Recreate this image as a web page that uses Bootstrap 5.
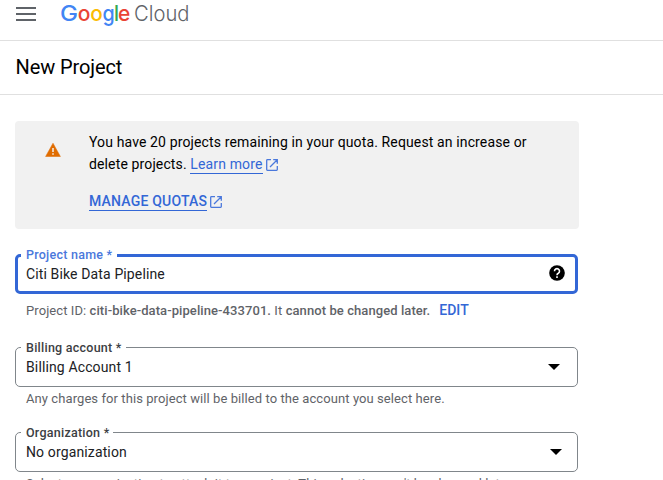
<!DOCTYPE html>
<html lang="en">
<head>
<meta charset="utf-8">
<meta name="viewport" content="width=device-width, initial-scale=1">
<title>New Project</title>
<link href="https://cdn.jsdelivr.net/npm/bootstrap@5.3.0/dist/css/bootstrap.min.css" rel="stylesheet">
<style>
body{font-family:Roboto,"Liberation Sans",sans-serif;font-size:14px;line-height:22px;letter-spacing:.13px;color:#202124;background:#fff;height:480px;overflow:hidden}
.topbar{height:41px;border-bottom:1px solid #e0e0e0;padding:0 16px 13px}
.brand{margin-left:24px;letter-spacing:0}
.titlebar{height:54px;border-bottom:1px solid #e0e0e0;padding:0 15.5px 2px}
.titlebar h1{font-size:20px;line-height:24px;font-weight:400;letter-spacing:-.1px;color:#000}
.page{padding:26px 0 0 15px;width:579px}
.notice{height:108px;background:#f1f1f1;border-radius:4px;padding:10px 30px 0 30px;color:#000}
.notice .warn{margin:11px 28px 0 0}
.notice p{width:450px;margin-bottom:15px}
.notice a{color:#3367d6;text-decoration:none;border-bottom:1px solid #3367d6;padding-bottom:1px}
.notice .quota{font-weight:500;letter-spacing:.2px}
.ext{vertical-align:-2px;margin-left:3px}
.field{width:563px;height:40px;margin-top:25px;border:1px solid #80868b;border-radius:5px;padding:0 17px 0 10px}
.field.active{border:3px solid #3367d6;padding:0 10px 0 8px;margin-bottom:4px}
.field label{left:5px;top:-8px;line-height:16px;padding:0 4px 0 5px;background:#fff;font-size:12.5px;font-weight:500;letter-spacing:.25px;color:#3c4043}
.field.active label{left:3px;top:-10px;padding-right:5px;color:#4a78dc}
.field .help{margin-bottom:2px}
.field.billing{margin-top:28px}
.field.org{padding-right:15px}
.hint{font-size:13px;line-height:16px;letter-spacing:.08px;color:#5f6368;padding-left:11px;white-space:nowrap}
.hint .id{font-weight:500}
.hint a{font-size:14px;font-weight:500;color:#3367d6;text-decoration:none;margin-left:5.5px}
</style>
</head>
<body>
<header class="topbar d-flex align-items-center">
  <svg width="21" height="14" viewBox="0 0 21 14"><path d="M0 1h20M0 7h20M0 13h20" stroke="#5f6368" stroke-width="2"/></svg>
  <svg class="brand" width="130" height="28" viewBox="0 0 130 28" font-size="22" font-family="Inter, sans-serif">
    <g font-weight="500">
      <text x="-1" y="21" fill="#4285f4" textLength="18" lengthAdjust="spacingAndGlyphs">G</text>
      <text x="16.8" y="21" fill="#ea4335" textLength="12.7" lengthAdjust="spacingAndGlyphs">o</text>
      <text x="29.3" y="21" fill="#fbbc04" textLength="12.5" lengthAdjust="spacingAndGlyphs">o</text>
      <text x="41.6" y="21" fill="#4285f4" textLength="12.2" lengthAdjust="spacingAndGlyphs">g</text>
      <text x="53" y="21" fill="#34a853" textLength="5" lengthAdjust="spacingAndGlyphs">l</text>
      <text x="57" y="21" fill="#ea4335" textLength="12.3" lengthAdjust="spacingAndGlyphs">e</text>
    </g>
    <text x="73" y="21" fill="#5f6368" font-size="21.5" font-weight="300" textLength="55.5" lengthAdjust="spacingAndGlyphs">Cloud</text>
  </svg>
</header>
<div class="titlebar d-flex align-items-center"><h1 class="mb-0">New Project</h1></div>
<main class="page">
  <section class="notice d-flex align-items-start">
    <svg class="warn flex-shrink-0" width="16" height="16" viewBox="0 0 16 16"><path d="M8 1.2 15.4 14.5H.6Z" fill="#e06c00" stroke="#e06c00" stroke-width=".5" stroke-linejoin="round"/><path d="M8 6v4M8 11.2v1.6" stroke="#f1f1f1" stroke-width="1.5"/></svg>
    <div>
      <p>You have 20 projects remaining in your quota. Request an increase or delete projects. <a href="#">Learn more</a><svg class="ext" width="12" height="12" viewBox="0 0 12 12" fill="none" stroke="#4a78dc" stroke-width="1.3"><path d="M5 .7H1.4Q.7.7.7 1.4v9.2q0 .7.7.7h9.2q.7 0 .7-.7V7M7.2.7h4.1v4.1M11 1 4 8"/></svg></p>
      <div class="quota"><a href="#">MANAGE QUOTAS</a><svg class="ext" width="12" height="12" viewBox="0 0 12 12" fill="none" stroke="#4a78dc" stroke-width="1.3"><path d="M5 .7H1.4Q.7.7.7 1.4v9.2q0 .7.7.7h9.2q.7 0 .7-.7V7M7.2.7h4.1v4.1M11 1 4 8"/></svg></div>
    </div>
  </section>
  <form>
    <div class="field active position-relative d-flex align-items-center justify-content-between">
      <label class="position-absolute">Project name *</label>
      <span>Citi Bike Data Pipeline</span>
      <svg class="help" width="16" height="16" viewBox="0 0 16 16"><circle cx="8" cy="8" r="7.8"/><path d="M5.5 6.2a2.5 2.5 0 1 1 3.8 2.1Q8 9 8 10.2M8 11.3V13" fill="none" stroke="#fff" stroke-width="1.6"/></svg>
    </div>
    <div class="hint pt-1">Project ID: <span class="id">citi-bike-data-pipeline-433701.</span> It <span class="id">cannot be changed later.</span> <a href="#">EDIT</a></div>
    <div class="field billing position-relative d-flex align-items-center justify-content-between">
      <label class="position-absolute">Billing account *</label>
      <span>Billing Account 1</span>
      <svg width="12" height="6" viewBox="0 0 12 6"><path d="M0 0h12L6 6Z"/></svg>
    </div>
    <div class="hint pt-1">Any charges for this project will be billed to the account you select here.</div>
    <div class="field org position-relative d-flex align-items-center justify-content-between">
      <label class="position-absolute">Organization *</label>
      <span>No organization</span>
      <svg width="12" height="6" viewBox="0 0 12 6"><path d="M0 0h12L6 6Z"/></svg>
    </div>
    <div class="hint pt-1">Select an organization to attach it to a project. This selection can't be changed later.</div>
  </form>
</main>
<script src="https://cdn.jsdelivr.net/npm/bootstrap@5.3.0/dist/js/bootstrap.bundle.min.js"></script>
</body>
</html>
